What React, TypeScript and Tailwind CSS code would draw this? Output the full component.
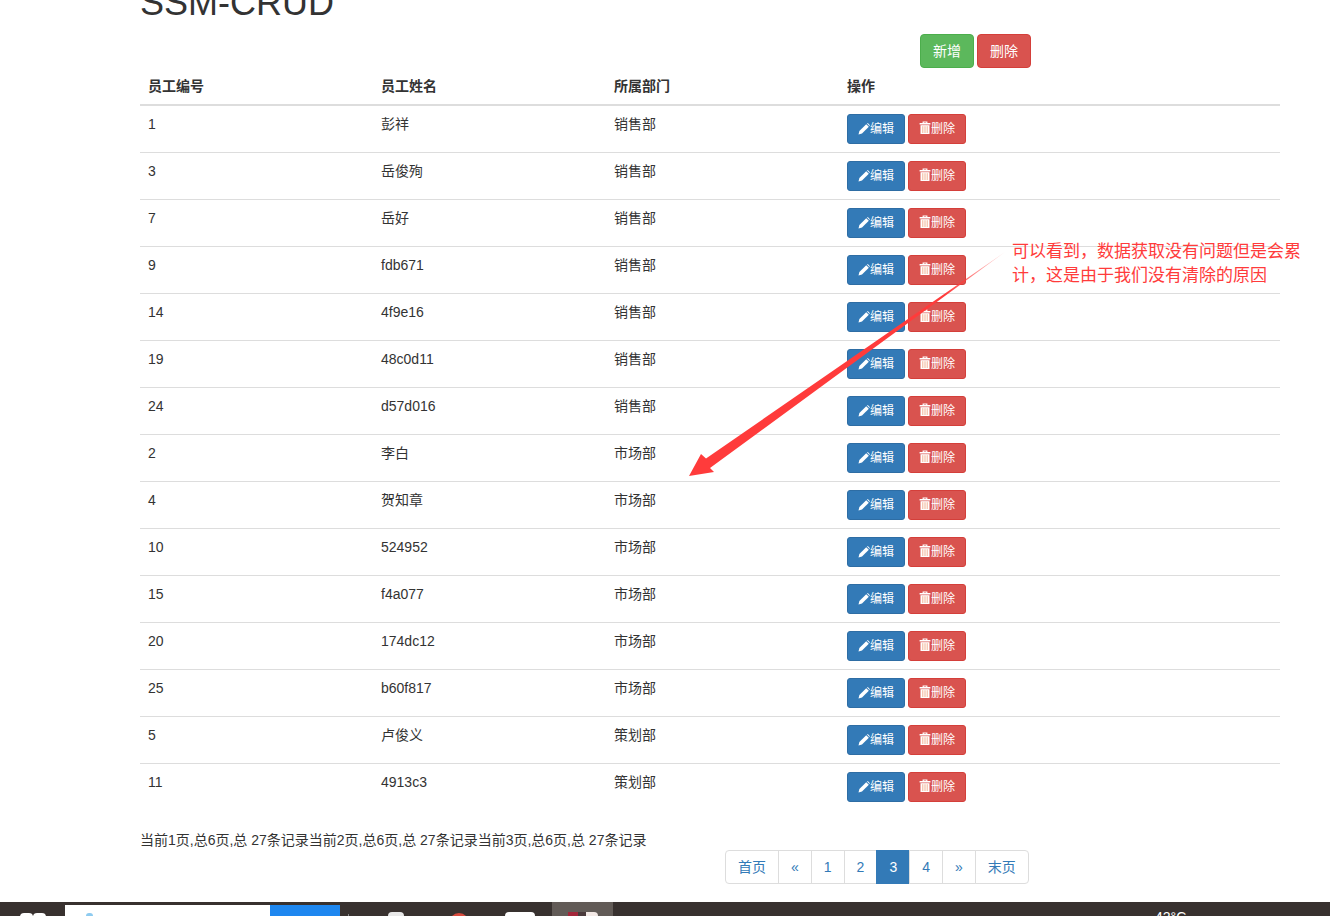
const employees = [
	{ id: 1, name: "彭祥", dept: "销售部" },
	{ id: 3, name: "岳俊殉", dept: "销售部" },
	{ id: 7, name: "岳好", dept: "销售部" },
	{ id: 9, name: "fdb671", dept: "销售部" },
	{ id: 14, name: "4f9e16", dept: "销售部" },
	{ id: 19, name: "48c0d11", dept: "销售部" },
	{ id: 24, name: "d57d016", dept: "销售部" },
	{ id: 2, name: "李白", dept: "市场部" },
	{ id: 4, name: "贺知章", dept: "市场部" },
	{ id: 10, name: "524952", dept: "市场部" },
	{ id: 15, name: "f4a077", dept: "市场部" },
	{ id: 20, name: "174dc12", dept: "市场部" },
	{ id: 25, name: "b60f817", dept: "市场部" },
	{ id: 5, name: "卢俊义", dept: "策划部" },
	{ id: 11, name: "4913c3", dept: "策划部" },
];

const pages = ["首页", "«", "1", "2", "3", "4", "»", "末页"];

function PencilIcon() {
	return (
		<svg width="12" height="12" viewBox="0 0 12 12" fill="#fff" className="shrink-0">
			<polygon points="0.5,11.5 1.4,8 8.2,1.2 10.8,3.8 4,10.6" />
			<polygon points="9,0.6 9.8,0.1 11.9,2.2 11.4,3" />
		</svg>
	);
}

function TrashIcon() {
	return (
		<svg width="12" height="14" viewBox="0 0 12 14" fill="#fff" className="-mt-[2px] shrink-0">
			<path d="M3.6 2V0.4h4.8V2h3v1.4H0.6V2zM4.8 2h2.4V1.4H4.8z" />
			<rect x="1.5" y="4.2" width="9" height="8.8" />
			<rect x="3" y="5.2" width="1.4" height="6.8" fill="#f6c9b4" />
			<rect x="5.3" y="5.2" width="1.4" height="6.8" fill="#f6c9b4" />
			<rect x="7.6" y="5.2" width="1.4" height="6.8" fill="#f6c9b4" />
		</svg>
	);
}

function RowButton({ color, icon, label }: { color: string; icon: React.ReactNode; label: string }) {
	return (
		<button className={`${color} flex h-[30px] w-[58px] items-center justify-center rounded-[3px] border text-[12px] text-white`}>
			{icon}
			{label}
		</button>
	);
}

function Taskbar() {
	return (
		<div className="flex h-[14px] overflow-hidden bg-[#38312f]">
			<div className="w-[65px] pl-[20px] pt-[11px]">
				<div className="flex">
					<div className="h-[8px] w-[13px] rounded-full bg-white" />
					<div className="h-[8px] w-[13px] rounded-full bg-white" />
				</div>
			</div>
			<div className="mt-[3px] h-[11px] w-[205px] bg-white pl-[21px] pt-[8px]">
				<div className="h-[6px] w-[7px] rounded-full bg-[#8ecbf0]" />
			</div>
			<div className="mt-[3px] h-[11px] w-[70px] bg-[#1e87f0]" />
			<div className="ml-[8px] mt-[12px] h-[2px] w-[1px] bg-[#8a8a8a]" />
			<div className="ml-[39px] mt-[10px] h-[8px] w-[16px] rounded-t-[4px] bg-[#e8e8e8]" />
			<div className="ml-[45px] mt-[11px] h-[20px] w-[20px] rounded-full bg-[#d94a3d]" />
			<div className="ml-[36px] mt-[10px] h-[12px] w-[30px] rounded-[4px] bg-white" />
			<div className="ml-[17px] flex h-[14px] w-[61px] justify-center bg-[#625b57] pt-[10px]">
				<div className="flex h-[8px] w-[30px] rounded-t-[4px] bg-[#f3e9e6]">
					<div className="h-[8px] w-[10px] bg-[#a3263a]" />
					<div className="h-[8px] w-[8px] bg-[#4a3a3c]" />
				</div>
			</div>
			<div className="ml-[542px] pt-[5px] text-[14px] leading-[20px] text-white">42°C</div>
		</div>
	);
}

export default function App() {
	return (
		<div className="relative h-[916px] w-[1330px] overflow-hidden bg-white font-['Liberation_Sans','Noto_Sans_CJK_SC',sans-serif] text-[14px] leading-[20px] text-[#333]">
			<div className="flow-root h-[902px] pl-[140px] pr-[50px]">
				<h1 className="-mt-[17px] mb-[11px] h-[40px] text-[36px] leading-[40px] font-normal">SSM-CRUD</h1>
				<div className="flex gap-[3px] pl-[780px]">
					<button className="h-[34px] w-[54px] rounded-[4px] border border-[#4cae4c] bg-[#5cb85c] text-white">新增</button>
					<button className="h-[34px] w-[54px] rounded-[4px] border border-[#d43f3a] bg-[#d9534f] text-white">删除</button>
				</div>
				<table className="w-full table-fixed border-separate border-spacing-0">
					<thead>
						<tr>
							<th className="w-[233px] border-b-2 border-[#ddd] p-2 text-left font-bold">员工编号</th>
							<th className="w-[233px] border-b-2 border-[#ddd] p-2 text-left font-bold">员工姓名</th>
							<th className="w-[233px] border-b-2 border-[#ddd] p-2 text-left font-bold">所属部门</th>
							<th className="border-b-2 border-[#ddd] p-2 text-left font-bold">操作</th>
						</tr>
					</thead>
					<tbody>
						{employees.map((emp, i) => {
							const cell = i === 0 ? "p-2 align-top" : "border-t border-[#ddd] p-2 align-top";
							return (
								<tr key={emp.id}>
									<td className={cell}>{emp.id}</td>
									<td className={cell}>{emp.name}</td>
									<td className={cell}>{emp.dept}</td>
									<td className={cell}>
										<div className="flex gap-[3px]">
											<RowButton color="border-[#2e6da4] bg-[#337ab7]" icon={<PencilIcon />} label="编辑" />
											<RowButton color="border-[#d43f3a] bg-[#d9534f]" icon={<TrashIcon />} label="删除" />
										</div>
									</td>
								</tr>
							);
						})}
					</tbody>
				</table>
				<div className="mt-5">当前1页,总6页,总 27条记录当前2页,总6页,总 27条记录当前3页,总6页,总 27条记录</div>
				<div className="flex pl-[585px]">
					{pages.map((page, i) => (
						<a
							key={page}
							className={`${i === 4 ? "border-[#337ab7] bg-[#337ab7] text-white" : "border-[#ddd] bg-white text-[#337ab7]"} ${
								i === 0 ? "rounded-l-[4px]" : "-ml-px"
							} ${i === 7 ? "rounded-r-[4px]" : ""} border px-3 py-1.5`}
						>
							{page}
						</a>
					))}
				</div>
			</div>
			<Taskbar />

			{/* annotation drawn over the table */}
			<svg className="absolute left-0 top-0" width="1330" height="916" fill="none">
				<defs>
					<linearGradient id="arrowFade" gradientUnits="userSpaceOnUse" x1="1005" y1="252" x2="945" y2="295">
						<stop offset="0" stopColor="#ff3b3b" stopOpacity="0.2" />
						<stop offset="1" stopColor="#ff3b3b" />
					</linearGradient>
				</defs>
				<polygon points="689,476 701,454 706,458.5 1005,252 710,468 714,472" fill="url(#arrowFade)" />
			</svg>
			<div className="absolute left-[1012px] top-[240px] whitespace-nowrap text-[17px] leading-[24px] text-[#ff3b3b]">
				可以看到，数据获取没有问题但是会累
				<br />
				计，这是由于我们没有清除的原因
			</div>
		</div>
	);
}
